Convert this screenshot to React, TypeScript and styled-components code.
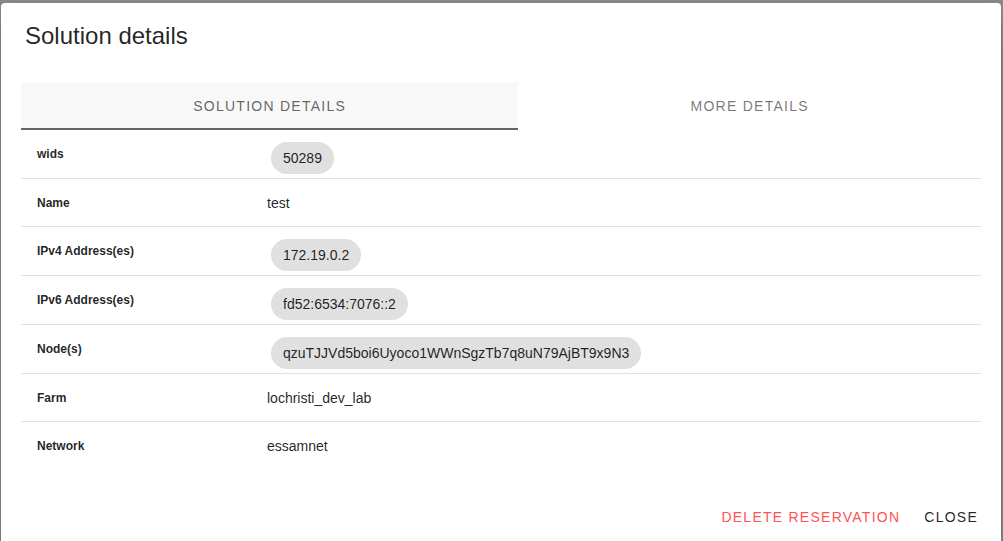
import styled, { createGlobalStyle } from 'styled-components'

const GlobalStyle = createGlobalStyle`
	html, body {
		margin: 0;
		padding: 0;
		background: #898989;
		font-family: 'Liberation Sans', Arial, sans-serif;
		overflow: hidden;
	}
`

const rows = [
	{ label: 'wids', value: '50289', chip: true },
	{ label: 'Name', value: 'test' },
	{ label: 'IPv4 Address(es)', value: '172.19.0.2', chip: true },
	{ label: 'IPv6 Address(es)', value: 'fd52:6534:7076::2', chip: true },
	{ label: 'Node(s)', value: 'qzuTJJVd5boi6Uyoco1WWnSgzTb7q8uN79AjBT9x9N3', chip: true },
	{ label: 'Farm', value: 'lochristi_dev_lab' },
	{ label: 'Network', value: 'essamnet' },
]

export default function App() {
	return (
		<>
			<GlobalStyle />
			<Overlay>
				<Dialog>
					<Title>Solution details</Title>
					<Body>
						<Tabs>
							<Tab active>Solution details</Tab>
							<Tab>More details</Tab>
						</Tabs>
						<Table>
							{rows.map((row, i) => (
								<Row key={row.label} last={i === rows.length - 1}>
									<Label>{row.label}</Label>
									<Value>{row.chip ? <Chip>{row.value}</Chip> : row.value}</Value>
								</Row>
							))}
						</Table>
					</Body>
					<Actions>
						<ActionButton danger>Delete reservation</ActionButton>
						<ActionButton>Close</ActionButton>
					</Actions>
				</Dialog>
			</Overlay>
		</>
	)
}

const Overlay = styled.div`
	height: 541px;
	padding: 3px 2px 0 1px;
	box-sizing: border-box;
	display: flex;
`
const Dialog = styled.div`
	flex: 1;
	background: #fff;
	border-radius: 4px 4px 0 0;
	box-shadow: 0 11px 15px -7px rgba(0, 0, 0, 0.2), 0 24px 38px 3px rgba(0, 0, 0, 0.14);
	display: flex;
	flex-direction: column;
	height: 560px;
`
const Title = styled.h2`
	margin: 0;
	padding: 17px 24px 0;
	font-size: 24px;
	line-height: 32px;
	font-weight: 400;
	color: rgba(0, 0, 0, 0.87);
`
const Body = styled.div`
	padding: 30px 20px 0;
`
const Tabs = styled.div`
	display: flex;
	height: 48px;
`
const Tab = styled.div<{ active?: boolean }>`
	flex: 1 1 auto;
	display: flex;
	align-items: center;
	justify-content: center;
	box-sizing: border-box;
	padding-top: 1px;
	font-size: 14px;
	font-weight: 400;
	text-transform: uppercase;
	letter-spacing: 1.25px;
	color: ${(p) => (p.active ? 'rgba(0,0,0,0.62)' : 'rgba(0,0,0,0.55)')};
	background: ${(p) => (p.active ? '#f8f8f8' : 'transparent')};
	border-bottom: 2px solid ${(p) => (p.active ? '#666' : 'transparent')};
`
const Table = styled.div`
	display: flex;
	flex-direction: column;
`
const Row = styled.div<{ last?: boolean }>`
	display: grid;
	grid-template-columns: 246px 1fr;
	align-items: center;
	box-sizing: border-box;
	min-height: 48px;
	padding: 4px 0;
	border-bottom: 1px solid ${(p) => (p.last ? 'transparent' : 'rgba(0,0,0,0.12)')};
`
const Label = styled.div`
	padding-left: 16px;
	font-size: 12px;
	font-weight: 700;
	color: rgba(0, 0, 0, 0.87);
`
const Value = styled.div`
	font-size: 14px;
	color: rgba(0, 0, 0, 0.87);
`
const Chip = styled.span`
	display: inline-flex;
	align-items: center;
	height: 32px;
	margin: 8px 0 0 4px;
	padding: 0 12px;
	border-radius: 16px;
	background: #e0e0e0;
	font-size: 14px;
	color: rgba(0, 0, 0, 0.87);
`
const Actions = styled.div`
	margin-top: auto;
	display: flex;
	justify-content: flex-end;
	gap: 8px;
	padding: 8px 15px 28px;
`
const ActionButton = styled.button<{ danger?: boolean }>`
	height: 36px;
	padding: 0 8px;
	border: none;
	background: transparent;
	font-family: inherit;
	font-size: 14px;
	font-weight: 400;
	letter-spacing: 1.25px;
	text-transform: uppercase;
	color: ${(p) => (p.danger ? '#ff5252' : 'rgba(0,0,0,0.87)')};
	cursor: pointer;
`
